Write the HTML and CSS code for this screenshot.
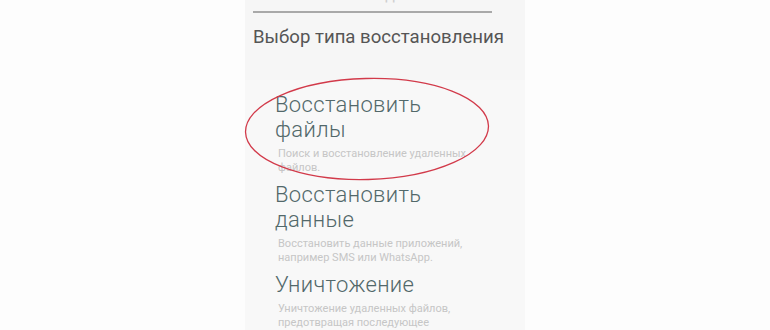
FILE: index.html
```html
<!DOCTYPE html>
<html lang="ru">
<head>
<meta charset="utf-8">
<link rel="stylesheet" href="styles.css">
</head>
<body>
<div class="page">
  <div class="panel">
    <div class="top">
      <div class="cut">Восстановление данных Android</div>
      <div class="rule"></div>
      <div class="heading">Выбор типа восстановления</div>
    </div>
    <ul class="options">
      <li class="option">
        <div class="title">Восстановить<br>файлы</div>
        <div class="desc">Поиск и восстановление удаленных<br>файлов.</div>
      </li>
      <li class="option">
        <div class="title">Восстановить<br>данные</div>
        <div class="desc">Восстановить данные приложений,<br>например SMS или WhatsApp.</div>
      </li>
      <li class="option">
        <div class="title">Уничтожение</div>
        <div class="desc">Уничтожение удаленных файлов,<br>предотвращая последующее</div>
      </li>
    </ul>
    <svg class="mark" width="250" height="108" viewBox="0 0 250 108">
      <ellipse cx="124" cy="53" rx="121.5" ry="50.5" fill="none" stroke="#d23a4a" stroke-width="1.3" transform="rotate(-1.5 124 53)"/>
    </svg>
  </div>
</div>
</body>
</html>
```
FILE: styles.css
```css
html, body {
  margin: 0;
  padding: 0;
}
body {
  background: #fdfdfd;
  font-family: Roboto, "Noto Sans", sans-serif;
  width: 770px;
  height: 330px;
  overflow: hidden;
}
.page {
  display: flex;
  padding-left: 245px;
}
.panel {
  position: relative;
  width: 280px;
  height: 330px;
  background: #f8f8f8;
}
.top {
  background: #f6f6f6;
  height: 80px;
  padding-left: 8px;
  overflow: hidden;
}
.cut {
  font-size: 16px;
  color: #cfcfcf;
  line-height: 16px;
  margin-top: -13px;
  padding-left: 4px;
}
.rule {
  width: 239px;
  height: 2px;
  background: #a9a9a9;
  margin-top: 8px;
}
.heading {
  margin-top: 12px;
  font-size: 18.6px;
  line-height: 24px;
  color: #555555;
  white-space: nowrap;
}
.options {
  list-style: none;
  margin: 0;
  padding: 12px 0 0 30px;
}
.option {
  margin-bottom: 7px;
}
.title {
  font-size: 22px;
  font-weight: 300;
  line-height: 25px;
  color: #52686a;
  letter-spacing: 0.35px;
}
.desc {
  margin-top: 5px;
  padding-left: 3px;
  font-size: 11px;
  line-height: 14px;
  color: #c6c6c6;
}
.mark {
  position: absolute;
  left: -2px;
  top: 76px;
  overflow: visible;
}
```
